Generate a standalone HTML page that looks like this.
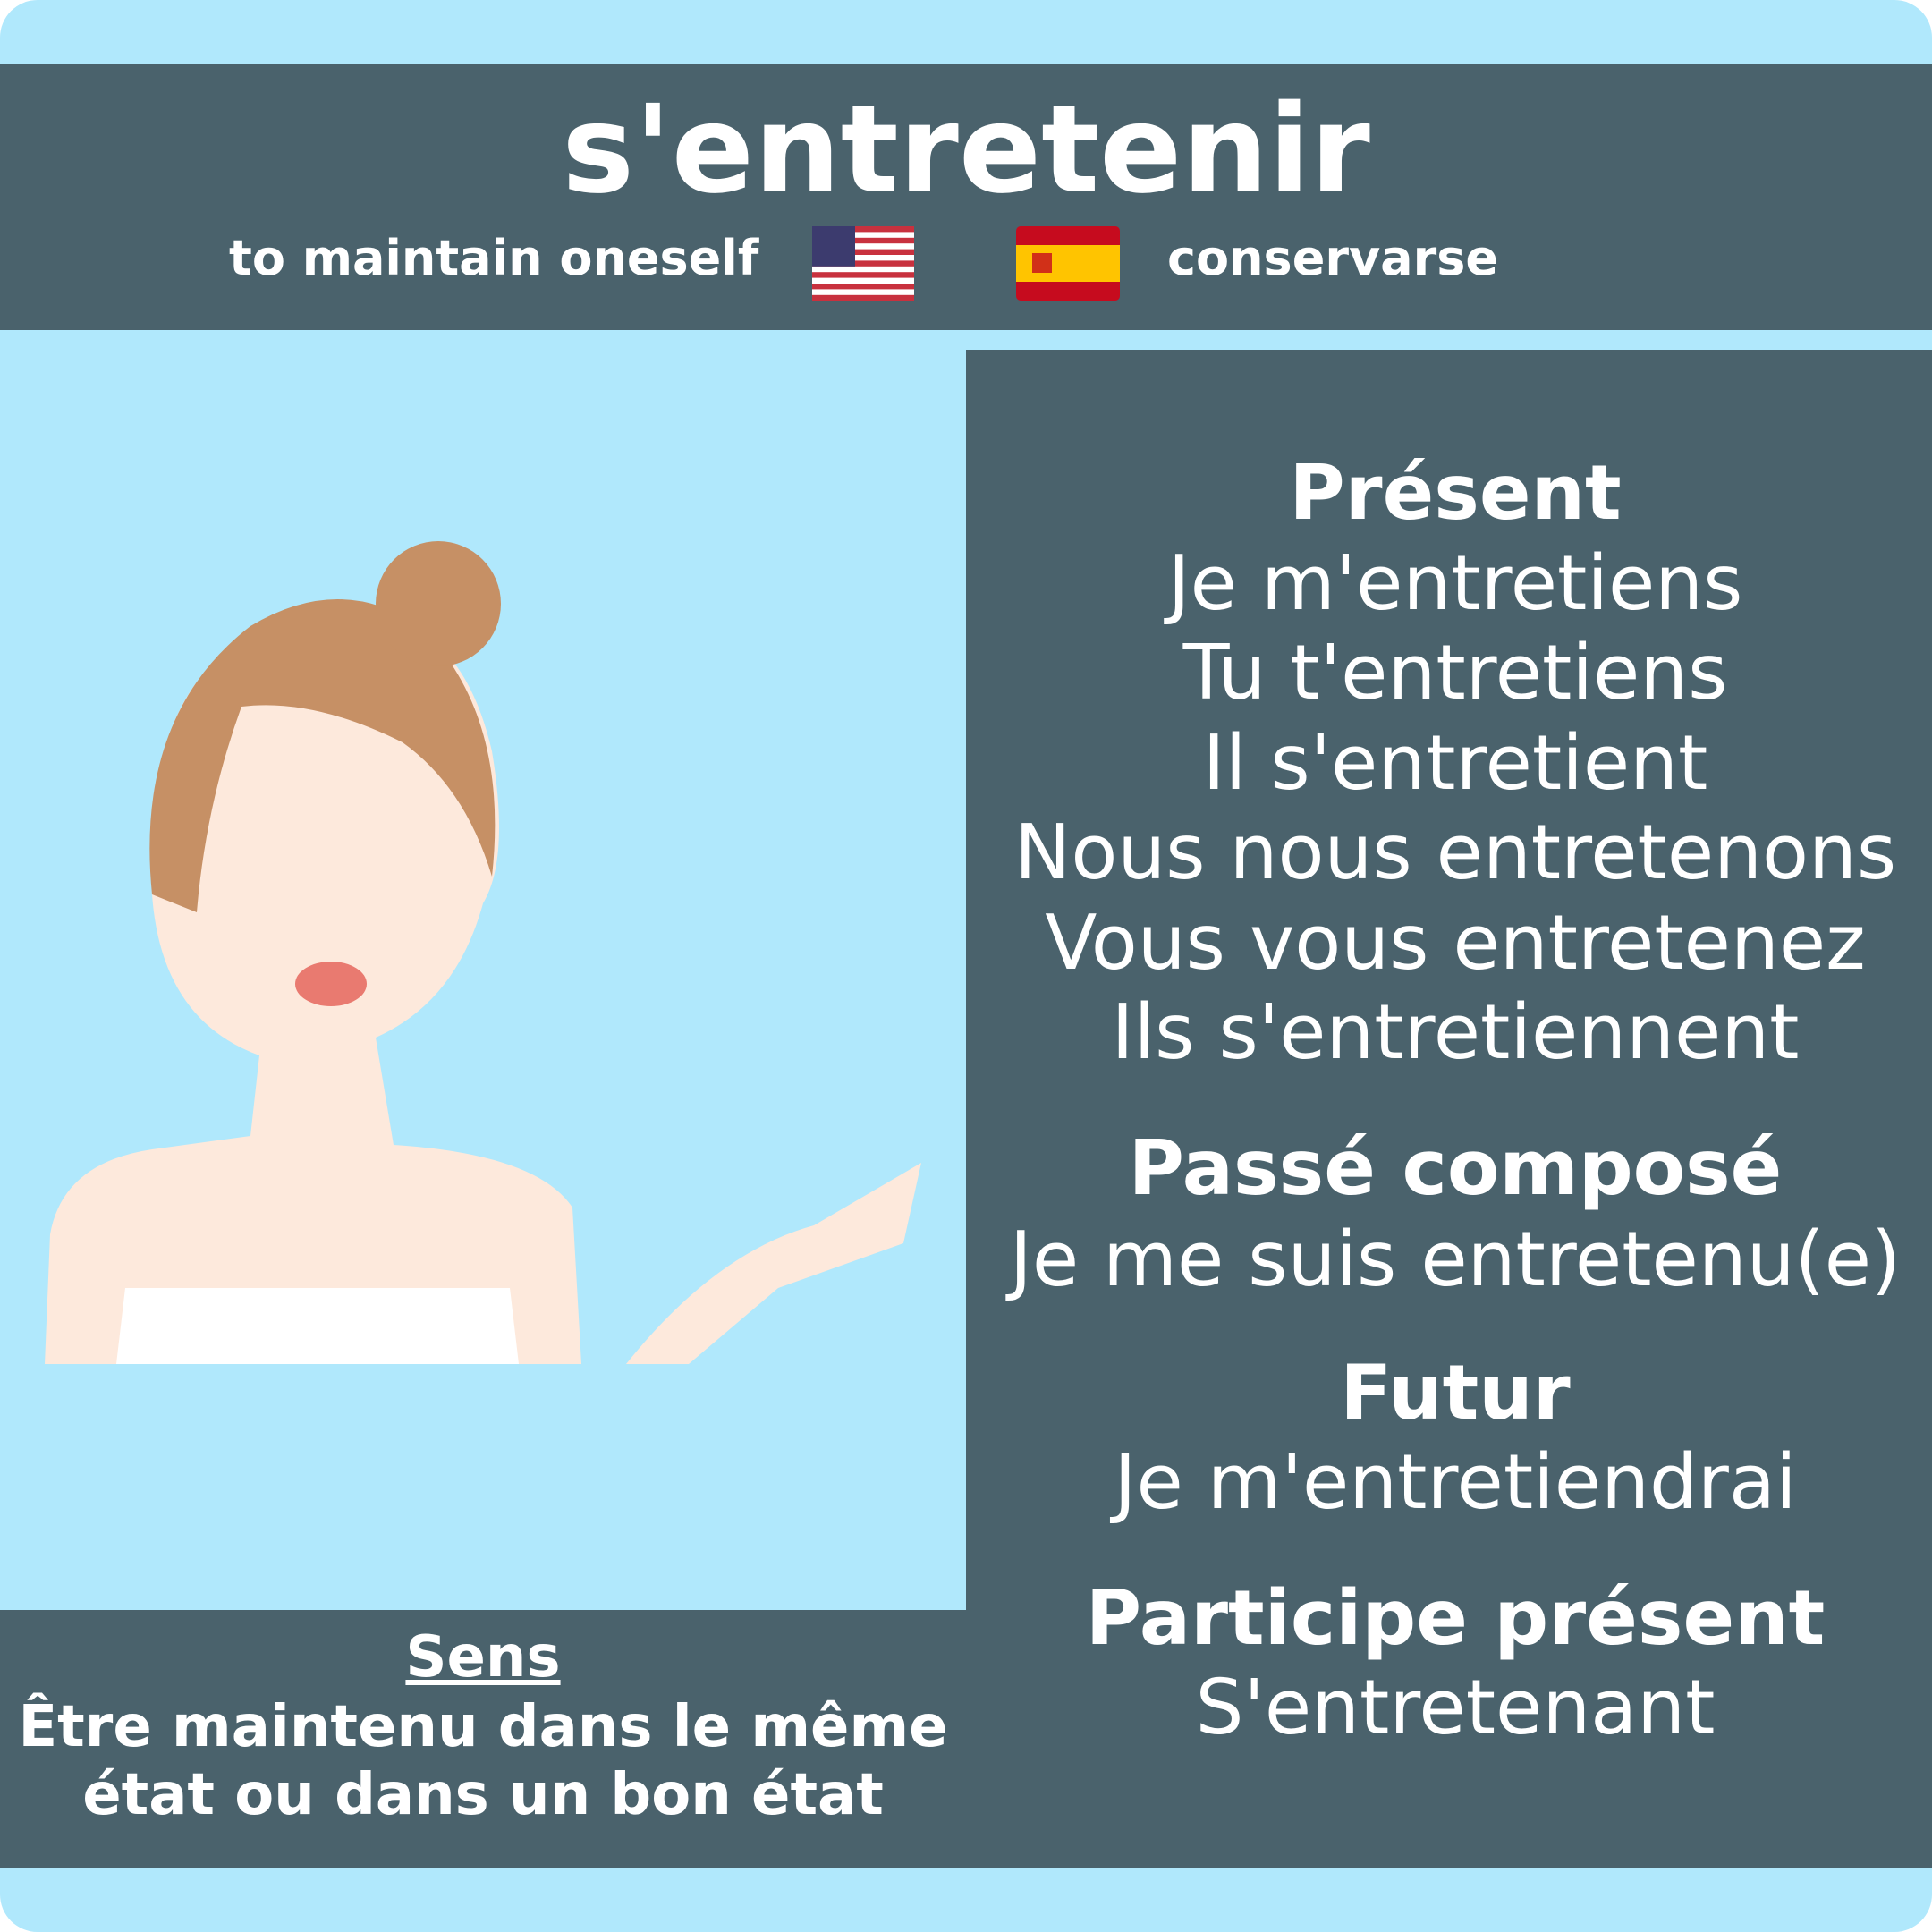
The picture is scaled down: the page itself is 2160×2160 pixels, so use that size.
<!DOCTYPE html>
<html><head><meta charset="utf-8"><style>
body{margin:0;width:2160px;height:2160px;overflow:hidden;background:#fff;font-family:"DejaVu Sans","Liberation Sans",sans-serif}
#c{position:absolute;left:0;top:0;width:2160px;height:2160px;background:#b0e8fc;border-radius:42px;overflow:hidden}
.band{position:absolute;background:#4a626c}
.t{position:absolute;white-space:nowrap;color:#fff;text-align:center;line-height:1}
.r{left:1087px;width:1080px;font-size:85px}
.b{font-weight:bold}
</style></head><body><div id="c">
<div class="band" style="left:0;top:72px;width:2160px;height:297px"></div>
<div class="band" style="left:1080px;top:391px;width:1080px;height:1697px"></div>
<div class="band" style="left:0;top:1800px;width:2160px;height:288px"></div>
<div class="t b" style="left:0;width:2160px;top:100px;font-size:136px">s'entretenir</div>
<div class="t b" style="left:256px;top:262px;font-size:54px;text-align:left">to maintain oneself</div>
<div class="t b" style="left:1305px;top:262px;font-size:54px;text-align:left">conservarse</div>
<svg style="position:absolute;left:908px;top:253px" width="114" height="83" viewBox="0 0 114 83">
<rect width="114" height="83" rx="5" fill="#fff"/>
<g fill="#c8313e"><rect y="0" width="114" height="6.4"/><rect y="12.8" width="114" height="6.4"/><rect y="25.6" width="114" height="6.4"/><rect y="38.4" width="114" height="6.4"/><rect y="51.2" width="114" height="6.4"/><rect y="64" width="114" height="6.4"/><rect y="76.8" width="114" height="6.2"/></g>
<rect width="48" height="44.8" fill="#3c3b6e"/></svg>
<svg style="position:absolute;left:1136px;top:253px" width="116" height="83" viewBox="0 0 116 83">
<rect width="116" height="83" rx="5" fill="#c60b1e"/><rect y="21" width="116" height="41" fill="#ffc400"/>
<rect x="18" y="30" width="22" height="22" fill="#c60b1e" opacity=".8"/></svg>
<svg style="position:absolute;left:50px;top:580px" width="990" height="945" viewBox="0 0 990 945">
<path d="M0 945 L6 800 Q20 720 120 705 L230 690 L240 600 Q130 560 120 420 Q110 250 180 170 Q260 90 380 110 Q470 130 500 260 Q520 380 490 430 Q460 540 370 580 L390 700 Q550 710 590 770 L600 945 Z" fill="#fde9dc"/>
<path d="M120 420 Q100 220 230 120 Q330 60 420 120 Q520 220 500 400 Q470 300 400 250 Q300 200 220 210 Q180 320 170 440 Z" fill="#c69065"/>
<circle cx="440" cy="95" r="70" fill="#c69065"/>
<path d="M80 945 L90 860 L520 860 L530 945 Z" fill="#fff"/>
<path d="M650 945 Q750 820 860 790 L980 720 L960 810 L820 860 L720 945 Z" fill="#fde9dc"/>
<ellipse cx="320" cy="520" rx="40" ry="25" fill="#e97a70"/>
</svg>
<div class="t b r" style="top:509px">Présent</div>
<div class="t r" style="top:610px">Je m'entretiens</div>
<div class="t r" style="top:710px">Tu t'entretiens</div>
<div class="t r" style="top:811px">Il s'entretient</div>
<div class="t r" style="top:911px">Nous nous entretenons</div>
<div class="t r" style="top:1012px">Vous vous entretenez</div>
<div class="t r" style="top:1112px">Ils s'entretiennent</div>
<div class="t b r" style="top:1264px">Passé composé</div>
<div class="t r" style="top:1366px">Je me suis entretenu(e)</div>
<div class="t b r" style="top:1515px">Futur</div>
<div class="t r" style="top:1615px">Je m'entretiendrai</div>
<div class="t b r" style="top:1767px">Participe présent</div>
<div class="t r" style="top:1867px">S'entretenant</div>
<div class="t b" style="left:0;width:1080px;top:1821px;font-size:64px;text-decoration:underline">Sens</div>
<div class="t b" style="left:0;width:1080px;top:1899px;font-size:64px">Être maintenu dans le même</div>
<div class="t b" style="left:0;width:1080px;top:1975px;font-size:64px">état ou dans un bon état</div>
</div></body></html>
